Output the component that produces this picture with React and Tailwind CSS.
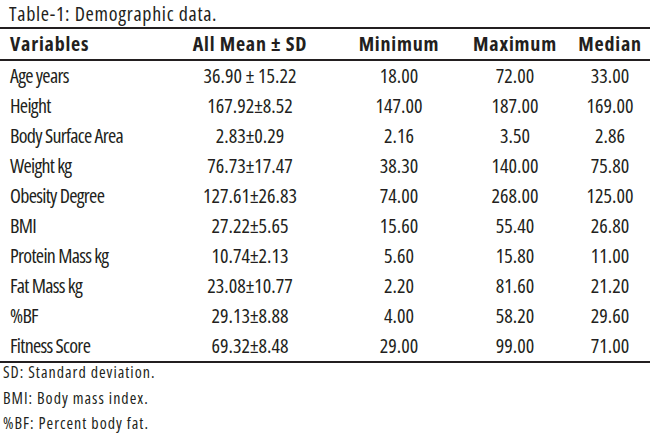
const rows = [
  ['Age years', '36.90 ± 15.22', '18.00', '72.00', '33.00'],
  ['Height', '167.92±8.52', '147.00', '187.00', '169.00'],
  ['Body Surface Area', '2.83±0.29', '2.16', '3.50', '2.86'],
  ['Weight kg', '76.73±17.47', '38.30', '140.00', '75.80'],
  ['Obesity Degree', '127.61±26.83', '74.00', '268.00', '125.00'],
  ['BMI', '27.22±5.65', '15.60', '55.40', '26.80'],
  ['Protein Mass kg', '10.74±2.13', '5.60', '15.80', '11.00'],
  ['Fat Mass kg', '23.08±10.77', '2.20', '81.60', '21.20'],
  ['%BF', '29.13±8.88', '4.00', '58.20', '29.60'],
  ['Fitness Score', '69.32±8.48', '29.00', '99.00', '71.00'],
]

const notes = ['SD: Standard deviation.', 'BMI: Body mass index.', '%BF: Percent body fat.']

function Row({ cells, bold }) {
  return (
    <div className={`grid grid-cols-[190px_120px_150px_110px_80px] items-center whitespace-nowrap ${bold ? 'h-[30px] font-bold tracking-[0.8px] pb-[3px]' : 'h-[30px]'}`}>
      <div className={bold ? 'pl-[10px]' : 'pl-[10px] tracking-[-0.7px]'}>{cells[0]}</div>
      <div className="text-center">{cells[1]}</div>
      <div className="pl-[28px] text-center">{cells[2]}</div>
      <div className="text-center">{cells[3]}</div>
      <div className="text-center">{cells[4]}</div>
    </div>
  )
}

export default function App() {
  return (
    <div className="w-[650px] h-[441px] bg-white text-[#231f20] font-['Open_Sans',sans-serif] font-stretch-condensed overflow-hidden">
      <div className="h-[27px] pl-[9px] text-[20px] leading-[27px] tracking-[0.7px]">Table-1: Demographic data.</div>
      <div className="border-y-2 border-[#231f20] text-[20px]">
        <div className="border-b-2 border-[#231f20]">
          <Row cells={['Variables', 'All Mean ± SD', 'Minimum', 'Maximum', 'Median']} bold />
        </div>
        {rows.map((r) => <Row key={r[0]} cells={r} />)}
      </div>
      <div className="-mt-[3px] pl-[3px] text-[16px] leading-[25.5px] tracking-[1px]">
        {notes.map((n) => <div key={n}>{n}</div>)}
      </div>
    </div>
  )
}
